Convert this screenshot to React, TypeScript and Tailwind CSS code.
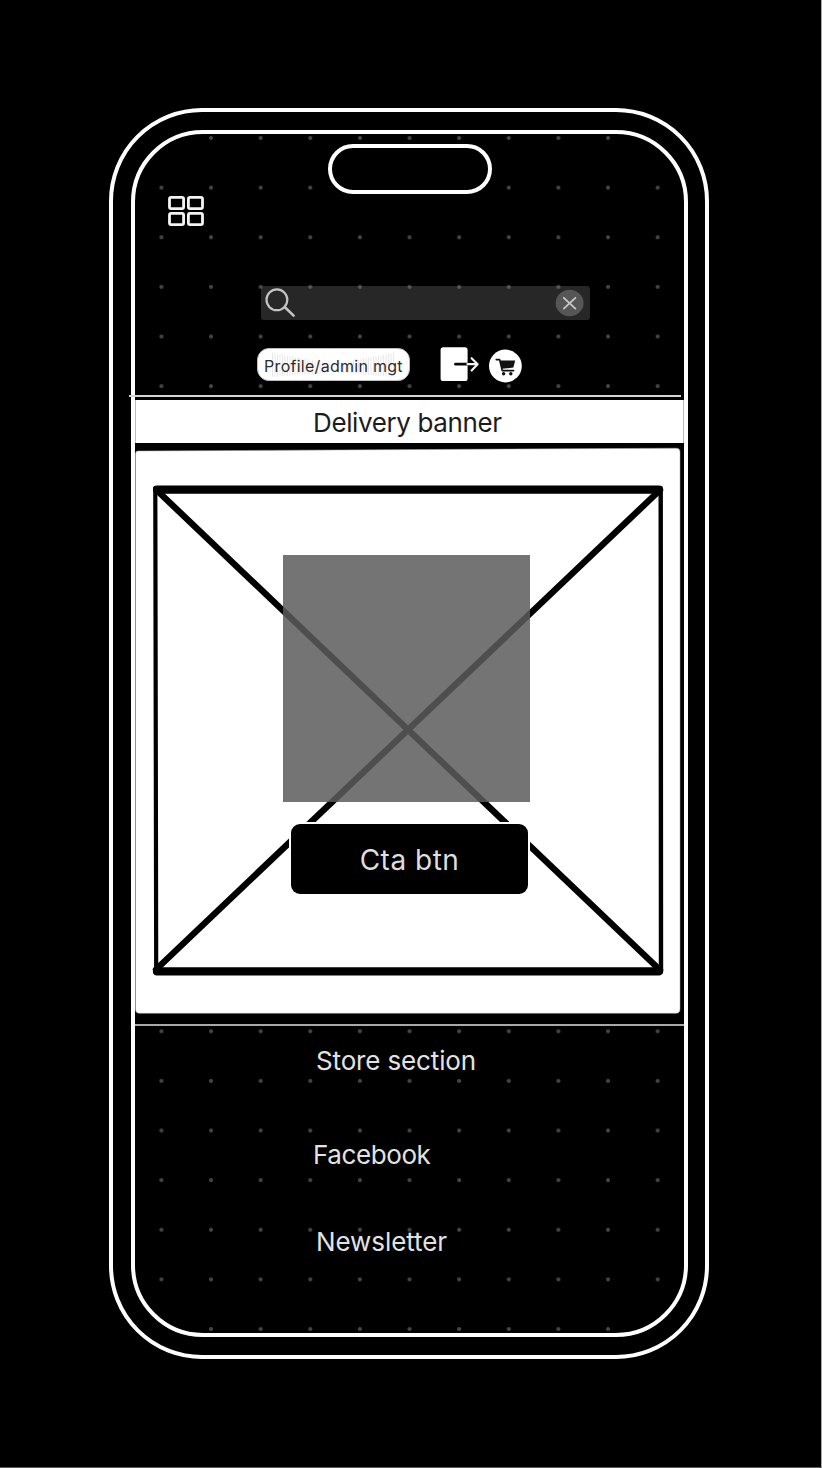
import React from "react";

function GridIcon() {
  return (
    <svg width="38" height="32" viewBox="0 0 38 32" className="ml-[32px] mt-px block" fill="none" stroke="#f4f4f4" strokeWidth="2.8">
      <rect x="2.5" y="2.4" width="14.1" height="11.2" rx="1.6" />
      <rect x="21.4" y="2.4" width="14.1" height="11.2" rx="1.6" />
      <rect x="2.5" y="18.4" width="14.1" height="11.2" rx="1.6" />
      <rect x="21.4" y="18.4" width="14.1" height="11.2" rx="1.6" />
    </svg>
  );
}

function SearchBar() {
  return (
    <div className="ml-[126px] mt-[59px] flex h-[34px] w-[329px] items-center justify-between rounded-[3px] bg-[#828282]/30 pl-[3px] pr-[6px]">
      <svg width="32" height="32" viewBox="0 0 32 32" fill="none" stroke="#c4c4c4" strokeLinecap="round">
        <circle cx="12.9" cy="12.8" r="10.4" strokeWidth="2.2" />
        <path d="M20.7 20 L29.6 28.6" strokeWidth="2.6" />
      </svg>
      <svg width="29" height="28" viewBox="0 0 29 28" fill="none">
        <ellipse cx="14.6" cy="14" rx="14" ry="13.2" fill="#565656" />
        <path d="M8.8 8.8 L20.4 19.6 M20.4 8.8 L8.8 19.6" stroke="#c8c8c8" strokeWidth="1.8" strokeLinecap="round" />
      </svg>
    </div>
  );
}

function ProfileButton() {
  const lines = Array.from({ length: 22 }, (_, i) => i);
  return (
    <div className="relative flex h-[33px] w-[153px] items-center justify-center rounded-[12px] border border-[#bdbdbd] bg-white">
      <svg className="absolute inset-0" width="151" height="31" viewBox="0 0 151 31" stroke="#e2e2e2" strokeWidth="0.8">
        {lines.map((i) => (
          <path key={i} d={`M${14.5 + i * 2.5} ${4 + i * 0.45} V${28 - i * 0.2} M${135.5 - i * 2.5} ${4 + i * 0.45} V${28 - i * 0.2}`} />
        ))}
      </svg>
      <span className="relative whitespace-nowrap pt-[3px] text-[16px] leading-none tracking-[0.28px] text-[#2c2c2c]">Profile/admin mgt</span>
    </div>
  );
}

function ActionRow() {
  return (
    <div className="ml-[122px] mt-[28px] flex h-[34px] items-start">
      <ProfileButton />
      <svg width="40" height="36" viewBox="0 0 40 36" className="ml-[30px] shrink-0 overflow-visible" fill="none">
        <rect x="0.6" y="-0.7" width="27" height="33.8" rx="2.6" fill="#fff" />
        <path d="M15.5 16.2 H28" stroke="#080808" strokeWidth="2.8" strokeLinecap="round" />
        <path d="M27.5 16.2 H37.5 M31.6 10.2 L37.6 16.2 L31.6 22.4" stroke="#f4f4f4" strokeWidth="2.2" strokeLinecap="round" strokeLinejoin="round" />
      </svg>
      <svg width="34" height="34" viewBox="0 0 34 34" className="ml-[8px] mt-px shrink-0">
        <circle cx="17.4" cy="17" r="16.4" fill="#fff" />
        <path d="M8.3 10.6 H11.6 L14.3 21.6 H25.5" fill="none" stroke="#111" strokeWidth="1.7" strokeLinecap="round" strokeLinejoin="round" />
        <path d="M12 11.4 H27.2 L25.4 18.6 L13.8 19.8 Z" fill="#111" />
        <circle cx="15.6" cy="24.7" r="1.7" fill="#111" />
        <circle cx="22.8" cy="24.7" r="1.7" fill="#111" />
      </svg>
    </div>
  );
}

function Hero() {
  return (
    <section className="relative h-[572px]">
      <svg width="549" height="572" viewBox="135 447 549 572" className="block">
        <path d="M138 451 L676 448.2 Q680 448 680 452 L680 1009 Q680 1013.3 676 1013.3 H139.5 Q135.5 1013.3 135.5 1009 V454 Q135.5 451 138 451 Z" fill="#fff" stroke="#aaa" strokeWidth="0.5" />
        <g fill="none" stroke="#000" strokeLinecap="round" strokeLinejoin="round">
          <path d="M157 489.6 H658.6 M157 971.4 H658.6" strokeWidth="8.2" />
          <path d="M155.3 488 L156.2 970" strokeWidth="4.2" />
          <path d="M660.7 488 L661 972" strokeWidth="4.4" />
          <path d="M156.5 490 L660 970 M660 490 L156 969.5" strokeWidth="6.4" />
        </g>
      </svg>
      <div className="absolute left-[147.5px] top-[108px] h-[247px] w-[247px] bg-[#5c5c5c]/85" />
      <button className="absolute left-[156px] top-[376.5px] flex h-[70.5px] w-[237px] items-center justify-center rounded-[9px] bg-black pt-[3px] text-[28px] tracking-[0.5px] text-[#dedede] shadow-[0_0_0_2px_#fff]">
        Cta btn
      </button>
    </section>
  );
}

export default function App() {
  return (
    <main className="h-[1468px] w-[822px] overflow-hidden border-b border-r border-b-[#5a5a5a] border-r-[#aaa] bg-black pl-[109px] pt-[108px] font-['Inter',sans-serif]">
      <div className="h-[1251px] w-[600px] rounded-[93px] border-4 border-white pl-[18px] pt-[18px]">
        <div className="relative h-[1207px] w-[557px] rounded-[72px] border-4 border-white bg-[radial-gradient(circle,#444_1.6px,transparent_2.3px)] bg-[length:49.63px_49.63px] bg-[position:1.6px_-20.8px]">
          <header className="h-[261px]">
            <div className="ml-[193px] h-[60px] pt-[10px]">
              <div className="h-[50px] w-[164px] rounded-full border-4 border-white bg-black" />
            </div>
            <GridIcon />
            <SearchBar />
            <ActionRow />
          </header>
          <div className="relative -ml-[6px] h-[2px] w-[552px] bg-[#d5d5d5]" />
          <div className="h-[50px] bg-black pt-[3px]">
            <div className="flex h-[43px] items-center border-l border-r border-[#bbb] bg-white pl-[177px] pt-[2px] text-[26px] tracking-[-0.38px] text-[#1c1c1c]">
              Delivery banner
            </div>
          </div>
          <div className="bg-black">
            <Hero />
            <div className="h-[5px]" />
            <div className="h-[2px] bg-[#a8a8a8]" />
          </div>
          <nav className="flex flex-col pl-[181px] text-[26px] leading-[32px] text-[#e2e2e2]">
            <span className="mt-[19px] tracking-[-0.14px]">Store section</span>
            <span className="-ml-[3px] mt-[62px] tracking-[-0.4px]">Facebook</span>
            <span className="mt-[55px] tracking-[-0.08px]">Newsletter</span>
          </nav>
        </div>
      </div>
    </main>
  );
}
